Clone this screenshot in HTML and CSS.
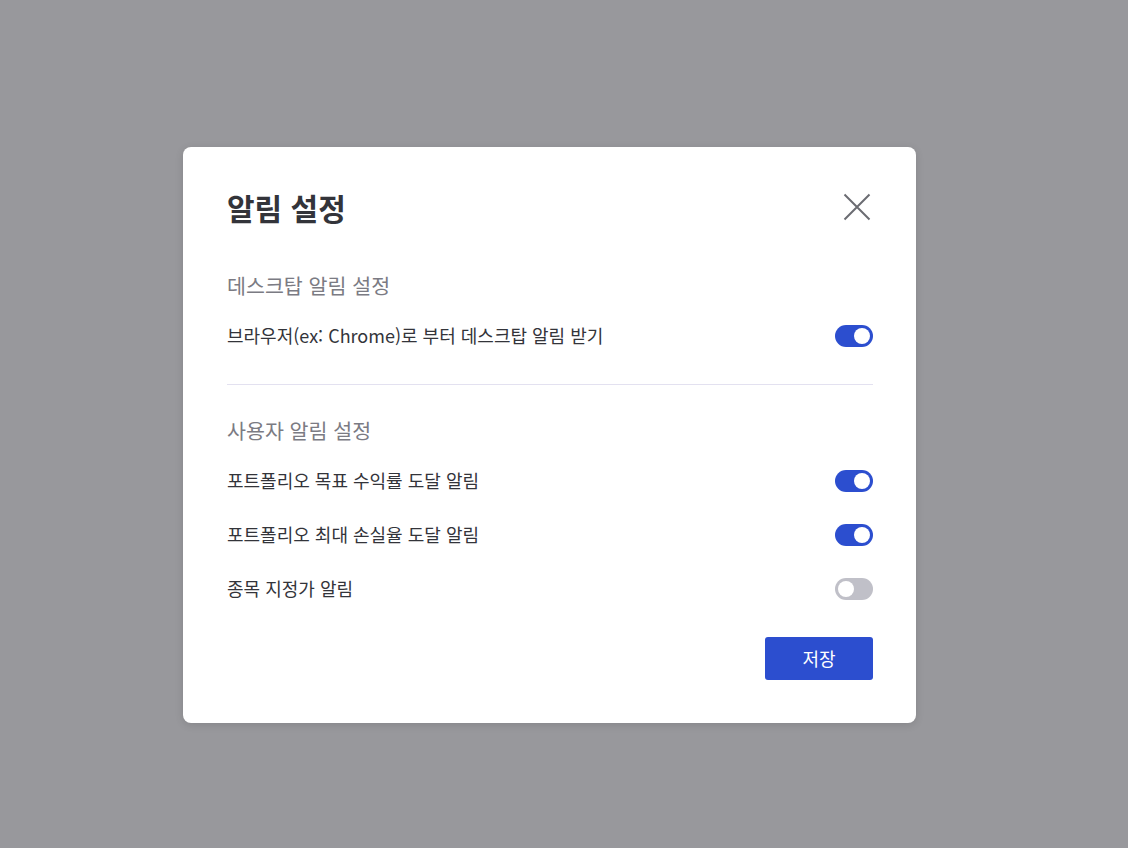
FILE: index.html
```html
<!DOCTYPE html>
<html lang="ko">
<head>
    <meta charset="UTF-8">
    <meta name="viewport" content="width=device-width, initial-scale=1.0">
    <title>알림 설정</title>
    <link rel="stylesheet" href="styles.css">
</head>
<body>
    <div class="overlay">
        <div class="modal">
            <div class="modal-head">
                <h1>알림 설정</h1>
                <button class="close-btn" aria-label="닫기">
                    <svg width="32" height="32" viewBox="0 0 32 32">
                        <path d="M3.5 3.5 L28.5 28.5 M28.5 3.5 L3.5 28.5" stroke="#6b6c72" stroke-width="2" fill="none"/>
                    </svg>
                </button>
            </div>

            <div class="section">
                <h2>데스크탑 알림 설정</h2>
                <div class="row">
                    <span class="row-label">브라우저(ex: Chrome)로 부터 데스크탑 알림 받기</span>
                    <label class="toggle on"><span class="knob"></span></label>
                </div>
            </div>

            <div class="divider"></div>

            <div class="section">
                <h2>사용자 알림 설정</h2>
                <div class="row">
                    <span class="row-label">포트폴리오 목표 수익률 도달 알림</span>
                    <label class="toggle on"><span class="knob"></span></label>
                </div>
                <div class="row">
                    <span class="row-label">포트폴리오 최대 손실율 도달 알림</span>
                    <label class="toggle on"><span class="knob"></span></label>
                </div>
                <div class="row">
                    <span class="row-label">종목 지정가 알림</span>
                    <label class="toggle"><span class="knob"></span></label>
                </div>
            </div>

            <div class="modal-foot">
                <button class="save-btn">저장</button>
            </div>
        </div>
    </div>
</body>
</html>
```

FILE: styles.css
```css
body {
    margin: 0;
    font-family: "Noto Sans CJK KR", "Noto Sans", sans-serif;
    background-color: #98989c;
    height: 848px;
    overflow: hidden;
}
.overlay {
    padding: 147px 0 0 183px;
}
.modal {
    width: 733px;
    box-sizing: border-box;
    background-color: #ffffff;
    border-radius: 8px;
    padding: 39px 43px 43px 44px;
    box-shadow: 0 2px 8px rgba(0, 0, 0, 0.12);
}
.modal-head {
    display: flex;
    justify-content: space-between;
    align-items: center;
    height: 42px;
}
.modal-head h1 {
    margin: 0;
    font-size: 30px;
    font-weight: 700;
    color: #33343a;
    line-height: 42px;
}
.close-btn {
    border: none;
    background: none;
    padding: 0;
    width: 32px;
    height: 32px;
    cursor: pointer;
}
.close-btn svg {
    display: block;
}
.section h2 {
    margin: 0 0 10px;
    font-size: 20.6px;
    font-weight: 400;
    line-height: 28px;
    color: #7b7b83;
}
.modal-head + .section {
    margin-top: 43px;
}
.row {
    display: flex;
    justify-content: space-between;
    align-items: center;
    height: 54px;
    font-size: 18px;
    color: #33343a;
}
.row-label {
    padding-bottom: 3px;
}
.divider {
    height: 1px;
    background-color: #e3e1f0;
    margin: 21px 0 31px;
}
.toggle {
    position: relative;
    width: 38px;
    height: 22px;
    border-radius: 11px;
    background-color: #c0c0c8;
}
.toggle.on {
    background-color: #2c4ecf;
}
.knob {
    position: absolute;
    top: 3px;
    left: 3px;
    width: 16px;
    height: 16px;
    border-radius: 50%;
    background-color: #ffffff;
}
.toggle.on .knob {
    left: 19px;
}
.modal-foot {
    display: flex;
    justify-content: flex-end;
    margin-top: 21px;
}
.save-btn {
    width: 108px;
    height: 43px;
    border: none;
    border-radius: 3px;
    background-color: #2c4ecf;
    color: #ffffff;
    font-family: inherit;
    font-size: 18px;
    padding-bottom: 2px;
    cursor: pointer;
}
```
